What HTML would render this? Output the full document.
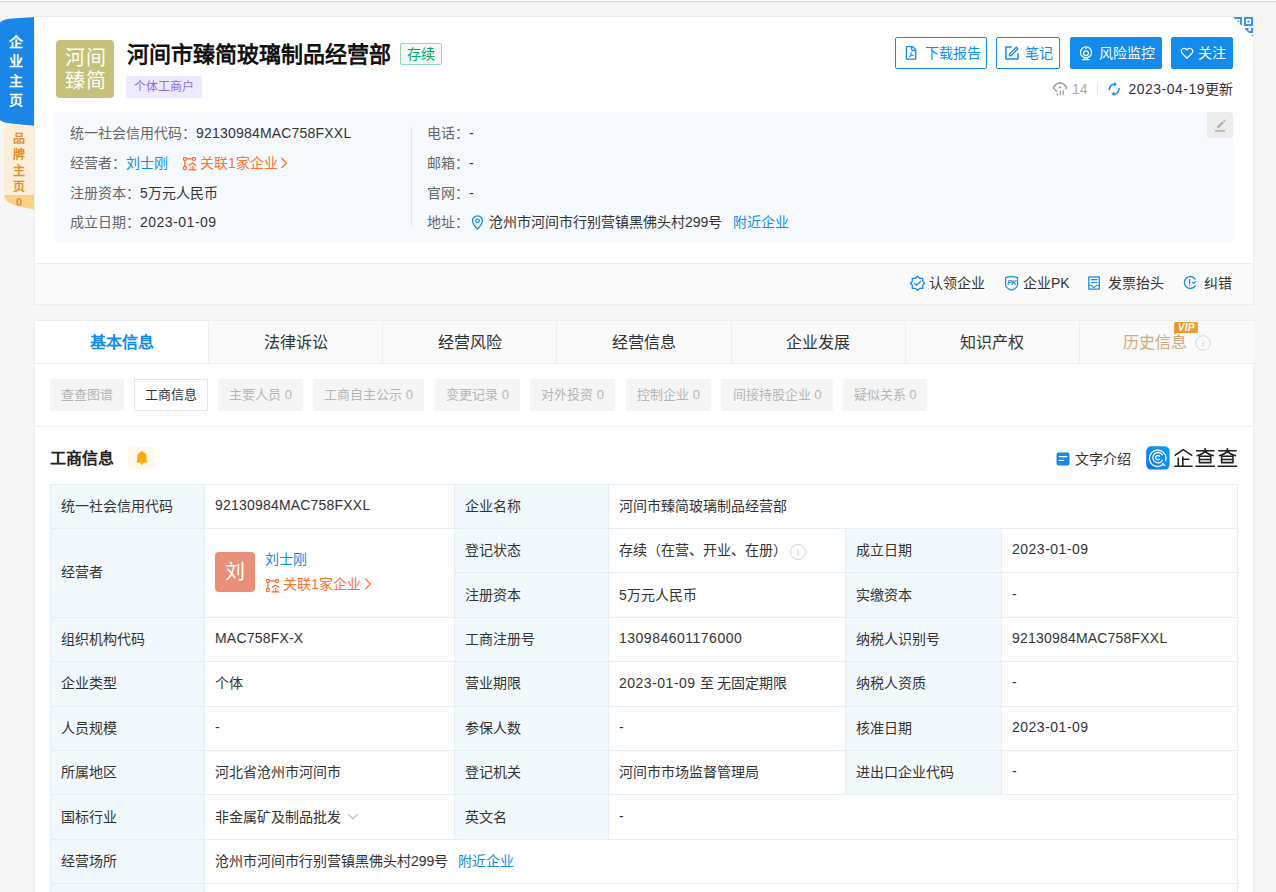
<!DOCTYPE html>
<html lang="zh-CN"><head><meta charset="utf-8">
<style>
*{box-sizing:border-box;margin:0;padding:0}
html,body{width:1276px;height:892px;overflow:hidden;background:#f6f6f6;font-family:"Liberation Sans",sans-serif;color:#333;font-size:14px}
.a{position:absolute;white-space:nowrap}
.topline{position:absolute;left:0;top:0;width:1276px;height:4px;background:linear-gradient(#fdfdfd 0,#fdfdfd 1px,#dcdcdc 1px,#dcdcdc 2px,#ececec 2px,#ececec 3px,#f3f3f3 3px)}
.card{position:absolute;left:34px;width:1220px;background:#fff;border:1px solid #eee}
.blue{color:#128bed}
.btn{position:absolute;top:37px;height:32px;border:1px solid #128bed;border-radius:2px;color:#128bed;font-size:14px;line-height:30px;padding-left:0;display:flex;align-items:center;justify-content:center}
.btn.fill{background:#128bed;color:#fff}
.btn svg{margin-right:6px}
.lbl{color:#666}
.n{letter-spacing:0.5px}
.m{letter-spacing:0.2px}
.tab{position:absolute;top:0;height:43px;width:174.14px;background:#fafafa;border-right:1px solid #eee;border-bottom:1px solid #eee;text-align:center;line-height:43px;font-size:16px;color:#333}
.tab.on{background:#fff;color:#128bed;font-weight:bold}
.sub{position:absolute;top:58px;height:32px;background:#f5f5f5;color:#b5b5b5;font-size:13px;line-height:32px;text-align:center}
.sub.on{background:#fff;border:1px solid #e6e6e6;color:#333;line-height:30px}
table{position:absolute;left:15px;top:163px;border-collapse:collapse;table-layout:fixed}
td{border:1px solid #e4eef6;height:44.4px;padding:0 10px 3px;font-size:14px;color:#333;vertical-align:middle;white-space:nowrap}
td.l{background:#f2f9fc}
</style></head><body>
<div class="topline"></div>

<!-- left tabs -->
<svg class="a" style="left:0;top:16px" width="35" height="196" viewBox="0 0 35 196">
  <path d="M0 6.5 Q3 3 12 2.5 L35 1 L35 110 L12 107.5 Q3 107 0 104 Z" fill="#1a87e8"/>
  <path d="M4 118 Q4 109 12 109 L35 110 L35 194 L14 188 Q4 185 4 176 Z" fill="#fdeed9"/>
  <path d="M4 179 L35 179 L35 194 L14 189 Q4 186 4 179 Z" fill="#fdd08a"/>
</svg>
<div class="a" style="left:9px;top:32.5px;width:14px;color:#fff;font-weight:bold;font-size:14px;line-height:19.5px;text-align:center;white-space:normal">企业主页</div>
<div class="a" style="left:12px;top:131px;width:14px;color:#e19227;font-weight:bold;font-size:12px;line-height:16px;text-align:center;white-space:normal">品牌主页</div>
<div class="a" style="left:12px;top:195px;width:14px;color:#e19227;font-weight:bold;font-size:11px;line-height:14px;text-align:center">0</div>

<!-- card 1 -->
<div class="card" style="top:16px;height:289px">
</div>
<!-- QR corner -->
<svg class="a" style="left:1233px;top:17px" width="20" height="20" viewBox="0 0 20 20">
  <defs><clipPath id="tri"><path d="M0 0 L20 0 L20 20 Z"/></clipPath></defs>
  <g clip-path="url(#tri)" fill="#3592ef">
    <rect x="12" y="1" width="7" height="7" fill="none" stroke="#3592ef" stroke-width="2"/>
    <rect x="14.5" y="3.6" width="2" height="2"/>
    <rect x="0" y="0" width="9" height="2"/><rect x="7" y="0" width="2" height="9"/>
    <rect x="4.5" y="3.5" width="1.6" height="1.6"/>
    <path d="M12 11H15.5V14H18V11H20V16H12Z"/>
    <rect x="18.5" y="18" width="1.5" height="1.5"/>
  </g>
</svg>

<div class="a" style="left:56px;top:40px;width:58px;height:58px;background:#c5c17a;border-radius:4px;color:#fffef5;font-size:20px;line-height:23.5px;text-align:center;white-space:normal;padding-top:6.5px;padding-left:1px;letter-spacing:1px">河间<br>臻简</div>
<div class="a" style="left:127px;top:42px;font-size:22px;font-weight:bold;color:#111;line-height:26px">河间市臻简玻璃制品经营部</div>
<div class="a" style="left:400px;top:43px;width:42px;height:22px;border:1px solid #95dbb8;background:#f4fbf7;border-radius:2px;color:#00a85d;font-size:14px;line-height:20px;text-align:center">存续</div>
<div class="a" style="left:126px;top:76px;width:76px;height:22px;background:#efeaff;border-radius:2px;color:#8b6ef3;font-size:12px;line-height:22px;text-align:center">个体工商户</div>

<!-- buttons -->
<div class="btn" style="left:895px;width:92px"></div>
<div class="btn" style="left:996px;width:64px"></div>
<div class="btn fill" style="left:1070px;width:92px"></div>
<div class="btn fill" style="left:1171px;width:62px"></div>
<svg class="a" style="left:900px;top:42px" width="24" height="22" viewBox="900 42 24 22" fill="none" stroke="#128bed" stroke-width="1.3" stroke-linejoin="round" stroke-linecap="round">
<path d="M906.4 46.7H912.8L915.7 49.6V59.2H906.4Z"/><path d="M911.6 46.9V49.3Q911.6 50.5 912.8 50.5H915.5"/>
<path d="M911 52.6V55.2L909.4 56.8M911.1 55.3H913.7" stroke-width="1.1"/>
</svg>
<div class="a" style="left:925px;top:44px;line-height:18px;color:#128bed">下载报告</div>
<svg class="a" style="left:1000px;top:42px" width="24" height="22" viewBox="1000 42 24 22" fill="none" stroke="#128bed" stroke-width="1.5" stroke-linejoin="round">
<path d="M1011.8 47.1H1005.9V58.9H1018V53.2"/>
<path d="M1009.4 55.9L1009.7 53.9L1016.3 47.3L1017.9 48.9L1011.3 55.5Z" stroke-width="1.3"/>
</svg>
<div class="a" style="left:1025px;top:44px;line-height:18px;color:#128bed">笔记</div>
<svg class="a" style="left:1074px;top:42px" width="24" height="22" viewBox="1074 42 24 22" fill="none" stroke="#fff" stroke-width="1.2">
<circle cx="1086" cy="52.4" r="5.5"/><circle cx="1086" cy="53.3" r="2.4"/><path d="M1085.3 48.6H1086.7" stroke-width="1"/>
<path d="M1084.6 57.6V59.2M1087.4 57.6V59.2M1082.3 59.6H1089.7" stroke-width="1.2"/>
</svg>
<div class="a" style="left:1099px;top:44px;line-height:18px;color:#fff">风险监控</div>
<svg class="a" style="left:1176px;top:42px" width="24" height="22" viewBox="1176 42 24 22" fill="none" stroke="#fff" stroke-width="1.25" stroke-linejoin="round">
<path d="M1187 58.3L1182.2 53.4Q1180.9 52 1181.3 50.4Q1181.8 48.6 1183.6 48.5Q1185.6 48.4 1187 49.8Q1188.4 48.4 1190.4 48.5Q1192.2 48.6 1192.7 50.4Q1193.1 52 1191.8 53.4Z"/>
</svg>
<div class="a" style="left:1198px;top:44px;line-height:18px;color:#fff">关注</div>

<!-- stats row -->
<svg class="a" style="left:1048px;top:78px" width="76" height="22" viewBox="1048 78 76 22" fill="none">
<path d="M1057.3 91.6Q1054.6 90 1053.4 87.6Q1056 83 1060 83Q1064 83 1066.6 87.6Q1066.2 88.6 1065.6 89.3" stroke="#999" stroke-width="1.3" stroke-linejoin="round"/>
<circle cx="1059.9" cy="87.4" r="1.1" fill="#999"/>
<path d="M1057.4 93.2V95.2M1060.3 90.8V95.2M1063.2 90.2V95.2" stroke="#999" stroke-width="1.2"/>
<path d="M1097.5 83V95" stroke="#e3e3e3" stroke-width="1"/>
<path d="M1109.5 90.2A4.8 4.8 0 0 1 1114.3 84.2" stroke="#128bed" stroke-width="1.5"/>
<path d="M1118.9 88A4.8 4.8 0 0 1 1114.1 94" stroke="#128bed" stroke-width="1.5"/>
<path d="M1114 82L1116.9 84.3L1114 86.5Z" fill="#128bed"/>
<path d="M1114.4 91.8L1111.5 94L1114.4 96.2Z" fill="#128bed"/>
</svg>
<div class="a" style="left:1072px;top:80px;color:#aaa;font-size:14px;line-height:18px">14</div>
<div class="a" style="right:43px;top:80px;color:#333;font-size:14px;line-height:18px"><span style="letter-spacing:0.5px">2023-04-19</span>更新</div>

<!-- info block -->
<div class="a" style="left:55px;top:112px;width:1178px;height:131px;background:#f6fafe;border-radius:4px"></div>
<div class="a" style="left:1207px;top:112px;width:26px;height:26px;background:#ececec;border-radius:0 4px 0 4px"></div>
<svg class="a" style="left:1207px;top:112px" width="26" height="26" viewBox="1207 112 26 26">
<path d="M1216.9 128.6L1217.4 126.3L1222.4 121.3L1223.9 122.8L1218.9 127.8Z" fill="#aaa"/>
<path d="M1223.2 120.6L1224.2 119.6L1225.5 120.9L1224.5 121.9Z" fill="#aaa"/>
<path d="M1214.8 130.9H1225.2" stroke="#aaa" stroke-width="1.5"/>
</svg>

<div class="a lbl" style="left:70px;top:124px;line-height:18px">统一社会信用代码：<span class="m" style="color:#333">92130984MAC758FXXL</span></div>
<div class="a lbl" style="left:70px;top:154px;line-height:18px">经营者：<span class="blue">刘士刚</span></div>
<svg class="a" style="left:182.7px;top:156.6px" width="15" height="15" viewBox="-0.5 -0.5 15 15"><g fill="none" stroke="#ff6a26" stroke-width="1.2"><circle cx="1.4" cy="1.4" r="1.55"/><circle cx="10.5" cy="1.4" r="1.55"/><circle cx="1.4" cy="10.5" r="1.55"/><path d="M2.95 1.4H8.95M1.4 2.95V8.95"/><path d="M5.4 8.1L9.1 5.5L12.6 8.1" stroke-linejoin="round"/><path d="M9.4 8.3V12M4.9 12.3H12.9"/><path d="M7 8.8V12M11.2 9.4V11" stroke-width="0.8" opacity="0.6"/></g></svg>
<div class="a" style="left:200px;top:154px;line-height:18px;color:#ff722d">关联1家企业</div>
<svg class="a" style="left:280px;top:157px" width="8" height="12" viewBox="0 0 8 12"><path d="M1.5 1l5 5-5 5" fill="none" stroke="#ff722d" stroke-width="1.3"/></svg>
<div class="a lbl" style="left:70px;top:184px;line-height:18px">注册资本：<span style="color:#333">5万元人民币</span></div>
<div class="a lbl" style="left:70px;top:213px;line-height:18px">成立日期：<span class="n" style="color:#333">2023-01-09</span></div>
<div class="a" style="left:411px;top:127px;width:1px;height:100px;background:#e6e6e6"></div>
<div class="a lbl" style="left:427px;top:124px;line-height:18px">电话：<span style="color:#333">-</span></div>
<div class="a lbl" style="left:427px;top:154px;line-height:18px">邮箱：<span style="color:#333">-</span></div>
<div class="a lbl" style="left:427px;top:184px;line-height:18px">官网：<span style="color:#333">-</span></div>
<div class="a lbl" style="left:427px;top:213px;line-height:18px">地址：</div>
<svg class="a" style="left:471px;top:215px" width="13" height="15" viewBox="0 0 13 15"><path d="M6.5 14S1.5 9 1.5 5.8A5 5 0 0 1 11.5 5.8C11.5 9 6.5 14 6.5 14Z" fill="none" stroke="#128bed" stroke-width="1.3"/><circle cx="6.5" cy="5.8" r="1.8" fill="none" stroke="#128bed" stroke-width="1.2"/></svg>
<div class="a" style="left:489px;top:213px;line-height:18px;color:#333">沧州市河间市行别营镇黑佛头村299号</div>
<div class="a blue" style="left:733px;top:213px;line-height:18px">附近企业</div>

<!-- action bar -->
<div class="a" style="left:35px;top:263px;width:1218px;height:41px;background:#fafafa;border-top:1px solid #eee"></div>
<svg class="a" style="left:900px;top:270px" width="340" height="26" viewBox="900 270 340 26" fill="none" stroke="#128bed" stroke-width="1.3" stroke-linejoin="round" stroke-linecap="round">
<path d="M917.5 276.3L919.5 278.3H922.7V281.4L924.6 283.3L922.7 285.3V288.4H919.5L917.5 290.4L915.5 288.4H912.3V285.3L910.4 283.3L912.3 281.4V278.3H915.5Z"/>
<path d="M914.5 283.4L916.5 285.3L920.6 281.4"/>
<path d="M1005.6 277.6Q1011.5 275.8 1017.5 277.6V285.2Q1016.5 288.6 1011.5 290.3Q1006.5 288.6 1005.6 285.2Z" stroke-width="1.2"/>
<text x="1011.6" y="284.6" font-size="7" font-weight="bold" font-style="italic" text-anchor="middle" fill="#128bed" stroke="none" font-family="Liberation Sans" letter-spacing="-0.4">PK</text>
<path d="M1088.8 276.8H1099.3V289.1H1088.8Z"/>
<path d="M1091.3 279.6H1096.9M1091.3 282.5H1096.9" stroke-width="1.1"/>
<path d="M1088.8 285.3H1091.2L1094 287.6L1096.9 285.3H1099.3" stroke-width="1.1"/>
<path d="M1195.1 279.2A5.9 5.9 0 1 0 1195.2 285.8"/>
<path d="M1189.6 279.6V284" stroke-width="1.2"/>
<circle cx="1189.6" cy="285.6" r="0.7" fill="#128bed" stroke="none"/>
<path d="M1192.6 282.4L1193.6 283.6L1195.6 281.4" stroke-width="1.1"/>
</svg>
<div class="a" style="left:929px;top:274px;line-height:18px">认领企业</div>
<div class="a" style="left:1023px;top:274px;line-height:18px">企业PK</div>
<div class="a" style="left:1108px;top:274px;line-height:18px">发票抬头</div>
<div class="a" style="left:1204px;top:274px;line-height:18px">纠错</div>

<!-- card 2 -->
<div class="card" style="top:320px;height:600px">
  <div class="tab on" style="left:0">基本信息</div>
  <div class="tab" style="left:174.14px">法律诉讼</div>
  <div class="tab" style="left:348.28px">经营风险</div>
  <div class="tab" style="left:522.42px">经营信息</div>
  <div class="tab" style="left:696.56px">企业发展</div>
  <div class="tab" style="left:870.7px">知识产权</div>
  <div class="tab" style="left:1044.84px;width:174.16px;border-right:none;color:#d6a878;text-indent:-23px">历史信息</div>
  <svg class="a" style="left:1138px;top:0px" width="40" height="36" viewBox="1173 321 40 36">
  <defs><linearGradient id="vg" x1="0" x2="1"><stop offset="0" stop-color="#e9922a"/><stop offset="1" stop-color="#f0a33a"/></linearGradient></defs>
  <path d="M1175.5 322H1196.5Q1198 322 1198 323.5V331.5Q1198 333 1196.5 333H1177.2L1174.2 334.8V323.5Q1174.2 322 1175.5 322Z" fill="url(#vg)"/>
  <text x="1186.3" y="331.4" font-size="10" letter-spacing="0.3" font-weight="bold" font-style="italic" text-anchor="middle" fill="#fff" font-family="Liberation Sans">VIP</text>
  <circle cx="1203" cy="343" r="7.3" fill="none" stroke="#d8d8d8" stroke-width="1"/>
  <path d="M1203 342.2V346.6" stroke="#d0d0d0" stroke-width="1.2"/>
  <circle cx="1203" cy="339.9" r="0.75" fill="#d0d0d0"/>
  </svg>

  <div class="sub" style="left:15px;width:74px">查查图谱</div>
  <div class="sub on" style="left:99px;width:74px">工商信息</div>
  <div class="sub" style="left:183px;width:85px">主要人员 0</div>
  <div class="sub" style="left:278px;width:111px">工商自主公示 0</div>
  <div class="sub" style="left:400px;width:85px">变更记录 0</div>
  <div class="sub" style="left:495px;width:85px">对外投资 0</div>
  <div class="sub" style="left:591px;width:85px">控制企业 0</div>
  <div class="sub" style="left:686px;width:112px">间接持股企业 0</div>
  <div class="sub" style="left:808px;width:84px">疑似关系 0</div>
  <div class="a" style="left:0;top:105px;width:1218px;height:1px;background:#eee"></div>

  <div class="a" style="left:15px;top:128px;font-size:16px;font-weight:bold;line-height:20px;color:#222">工商信息</div>
  <div class="a" style="left:93px;top:126px;width:27px;height:22px;background:#fff8ec;border-radius:3px"></div>
  <svg class="a" style="left:99px;top:128px" width="14" height="18" viewBox="134 449 14 18"><path d="M141.9 450.9C142.6 450.9 142.9 451.5 142.9 452.1C145.2 452.7 146.6 454.6 146.6 457.2V461.3L148.3 462.6H135.5L137.2 461.3V457.2C137.2 454.6 138.6 452.7 140.9 452.1C140.9 451.5 141.2 450.9 141.9 450.9Z" fill="#ffaa00"/><path d="M140 462.5H143.8L141.9 465.2Z" fill="#ffaa00"/></svg>

  <svg class="a" style="left:1021px;top:131px" width="14" height="14" viewBox="0 0 14 14"><rect x="0.5" y="0.5" width="13" height="13" rx="2.2" fill="#1a87e8"/><path d="M3.2 4.6h7.6M3.2 8.3h4.4" stroke="#fff" stroke-width="1.25" stroke-linecap="round"/></svg>
  <div class="a" style="left:1040px;top:129px;line-height:18px">文字介绍</div>
  <svg class="a" style="left:1110px;top:124px" width="100" height="26" viewBox="1145 445 100 26">
  <defs><linearGradient id="qg" x1="0" y1="1" x2="1" y2="0"><stop offset="0" stop-color="#0f72ea"/><stop offset="1" stop-color="#09a2ff"/></linearGradient></defs>
  <rect x="1146.2" y="446.2" width="23.4" height="23.4" rx="5" fill="url(#qg)"/>
  <g fill="none" stroke="#fff" stroke-width="1.3" stroke-linecap="round">
   <path d="M1163.3 464.3A8.2 8.2 0 1 1 1165.6 460.6"/><path d="M1162.4 463.4L1164.8 465.6"/>
   <path d="M1162.4 454.9A5.2 5.2 0 1 0 1162.4 460.5"/>
   <path d="M1159.6 456.4A2.2 2.2 0 1 0 1159.6 459"/>
  </g>
  <g fill="none" stroke="#222" stroke-width="1.6" stroke-linejoin="round">
   <path d="M1174.6 455.6L1183.2 449.6L1192.3 455.6M1178.3 457.6V466.2M1182.8 456.4V466.2M1182.8 459.3H1189.4M1174.2 466.2H1192.7"/>
   <path d="M1205.2 448V450.7M1196 450.7H1214.5M1205.2 451Q1202.5 454.6 1196.6 455.8M1205.2 451Q1207.9 454.6 1213.9 455.8M1199.4 462.6V456.3H1210.8V462.6ZM1199.4 459.5H1210.8M1195.4 466.2H1215"/>
   <path d="M1227.4 448V450.7M1218.2 450.7H1236.7M1227.4 451Q1224.7 454.6 1218.8 455.8M1227.4 451Q1230.1000000000001 454.6 1236.1000000000001 455.8M1221.6000000000001 462.6V456.3H1233.0V462.6ZM1221.6000000000001 459.5H1233.0M1217.6000000000001 466.2H1237.2"/>
  </g>
</svg>
</div>

<table style="left:50px;top:483.6px">
<colgroup><col style="width:154px"><col style="width:250px"><col style="width:154px"><col style="width:237px"><col style="width:156px"><col style="width:236px"></colgroup>
<tr><td class="l">统一社会信用代码</td><td><span class="m">92130984MAC758FXXL</span></td><td class="l">企业名称</td><td colspan="3">河间市臻简玻璃制品经营部</td></tr>
<tr><td class="l" rowspan="2">经营者</td><td rowspan="2" style="position:relative"></td><td class="l">登记状态</td><td>存续（在营、开业、在册）<span style="display:inline-block;width:16px;height:16px;border:1px solid #d8d8d8;border-radius:50%;margin-left:3px;vertical-align:-1px;font-size:11px;line-height:14px;color:#ccc;text-align:center;font-family:'Liberation Serif',serif">i</span></td><td class="l">成立日期</td><td><span class="n">2023-01-09</span></td></tr>
<tr><td class="l">注册资本</td><td>5万元人民币</td><td class="l">实缴资本</td><td>-</td></tr>
<tr><td class="l">组织机构代码</td><td><span class="m">MAC758FX-X</span></td><td class="l">工商注册号</td><td><span class="n">130984601176000</span></td><td class="l">纳税人识别号</td><td><span class="m">92130984MAC758FXXL</span></td></tr>
<tr><td class="l">企业类型</td><td>个体</td><td class="l">营业期限</td><td><span class="n">2023-01-09</span> 至 无固定期限</td><td class="l">纳税人资质</td><td>-</td></tr>
<tr><td class="l">人员规模</td><td>-</td><td class="l">参保人数</td><td>-</td><td class="l">核准日期</td><td><span class="n">2023-01-09</span></td></tr>
<tr><td class="l">所属地区</td><td>河北省沧州市河间市</td><td class="l">登记机关</td><td>河间市市场监督管理局</td><td class="l">进出口企业代码</td><td>-</td></tr>
<tr><td class="l">国标行业</td><td>非金属矿及制品批发<svg width="10" height="6" viewBox="0 0 10 6" style="margin-left:7px;vertical-align:2px"><path d="M0.5 0.5l4.5 4.5 4.5-4.5" fill="none" stroke="#bbb" stroke-width="1.1"/></svg></td><td class="l">英文名</td><td colspan="3">-</td></tr>
<tr><td class="l">经营场所</td><td colspan="5">沧州市河间市行别营镇黑佛头村299号<span class="blue" style="margin-left:10px">附近企业</span></td></tr>
<tr><td class="l"></td><td colspan="5"></td></tr>
</table>

<!-- avatar cell -->
<div class="a" style="left:215px;top:552px;width:40px;height:40px;background:#e8907a;border-radius:4px;color:#fff;font-size:20px;line-height:40px;text-align:center">刘</div>
<div class="a blue" style="left:265px;top:550px;line-height:18px">刘士刚</div>
<svg class="a" style="left:265.6px;top:578.6px" width="15" height="15" viewBox="-0.5 -0.5 15 15"><g fill="none" stroke="#ff6a26" stroke-width="1.2"><circle cx="1.4" cy="1.4" r="1.55"/><circle cx="10.5" cy="1.4" r="1.55"/><circle cx="1.4" cy="10.5" r="1.55"/><path d="M2.95 1.4H8.95M1.4 2.95V8.95"/><path d="M5.4 8.1L9.1 5.5L12.6 8.1" stroke-linejoin="round"/><path d="M9.4 8.3V12M4.9 12.3H12.9"/><path d="M7 8.8V12M11.2 9.4V11" stroke-width="0.8" opacity="0.6"/></g></svg>
<div class="a" style="left:283px;top:575px;line-height:18px;color:#ff722d">关联1家企业</div>
<svg class="a" style="left:364px;top:578px" width="8" height="12" viewBox="0 0 8 12"><path d="M1.5 1l5 5-5 5" fill="none" stroke="#ff722d" stroke-width="1.3"/></svg>

</body></html>
